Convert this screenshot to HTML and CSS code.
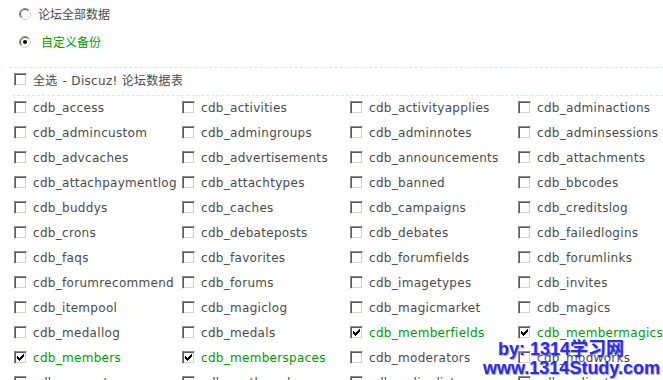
FILE: index.html
```html
<!DOCTYPE html>
<html lang="zh-CN">
<head>
<meta charset="utf-8">
<title>数据备份</title>
<link rel="stylesheet" href="styles.css">
</head>
<body>
<div class="choices">
  <label class="opt">
    <svg class="radio" width="12" height="12" viewBox="0 0 12 12"><circle cx="6" cy="6" r="5.5" fill="#fff" stroke="#fff"/><path d="M9.9 2.1A5.5 5.5 0 0 1 2.1 9.9" fill="none" stroke="#d4d0c8"/><path d="M2.1 9.9A5.5 5.5 0 0 1 9.9 2.1" fill="none" stroke="#8c8c8c"/><path d="M2.8 9.2A4.5 4.5 0 0 1 9.2 2.8" fill="none" stroke="#555"/></svg>
    <span>论坛全部数据</span>
  </label>
  <label class="opt">
    <svg class="radio" width="12" height="12" viewBox="0 0 12 12"><circle cx="6" cy="6" r="5.5" fill="#fff" stroke="#fff"/><path d="M9.9 2.1A5.5 5.5 0 0 1 2.1 9.9" fill="none" stroke="#d4d0c8"/><path d="M2.1 9.9A5.5 5.5 0 0 1 9.9 2.1" fill="none" stroke="#8c8c8c"/><path d="M2.8 9.2A4.5 4.5 0 0 1 9.2 2.8" fill="none" stroke="#555"/><circle cx="6" cy="6" r="2" fill="#000"/></svg>
    <span class="green custom">自定义备份</span>
  </label>
</div>

<div class="section">
  <div class="head">
    <span class="cb"></span>
    <span class="label">全选</span>
    <span class="desc">- Discuz! 论坛数据表</span>
  </div>
</div>

<div class="grid">
  <label class="item"><span class="cb"></span><span>cdb_access</span></label>
  <label class="item"><span class="cb"></span><span>cdb_activities</span></label>
  <label class="item"><span class="cb"></span><span>cdb_activityapplies</span></label>
  <label class="item"><span class="cb"></span><span>cdb_adminactions</span></label>

  <label class="item"><span class="cb"></span><span>cdb_admincustom</span></label>
  <label class="item"><span class="cb"></span><span>cdb_admingroups</span></label>
  <label class="item"><span class="cb"></span><span>cdb_adminnotes</span></label>
  <label class="item"><span class="cb"></span><span>cdb_adminsessions</span></label>

  <label class="item"><span class="cb"></span><span>cdb_advcaches</span></label>
  <label class="item"><span class="cb"></span><span>cdb_advertisements</span></label>
  <label class="item"><span class="cb"></span><span>cdb_announcements</span></label>
  <label class="item"><span class="cb"></span><span>cdb_attachments</span></label>

  <label class="item"><span class="cb"></span><span>cdb_attachpaymentlog</span></label>
  <label class="item"><span class="cb"></span><span>cdb_attachtypes</span></label>
  <label class="item"><span class="cb"></span><span>cdb_banned</span></label>
  <label class="item"><span class="cb"></span><span>cdb_bbcodes</span></label>

  <label class="item"><span class="cb"></span><span>cdb_buddys</span></label>
  <label class="item"><span class="cb"></span><span>cdb_caches</span></label>
  <label class="item"><span class="cb"></span><span>cdb_campaigns</span></label>
  <label class="item"><span class="cb"></span><span>cdb_creditslog</span></label>

  <label class="item"><span class="cb"></span><span>cdb_crons</span></label>
  <label class="item"><span class="cb"></span><span>cdb_debateposts</span></label>
  <label class="item"><span class="cb"></span><span>cdb_debates</span></label>
  <label class="item"><span class="cb"></span><span>cdb_failedlogins</span></label>

  <label class="item"><span class="cb"></span><span>cdb_faqs</span></label>
  <label class="item"><span class="cb"></span><span>cdb_favorites</span></label>
  <label class="item"><span class="cb"></span><span>cdb_forumfields</span></label>
  <label class="item"><span class="cb"></span><span>cdb_forumlinks</span></label>

  <label class="item"><span class="cb"></span><span>cdb_forumrecommend</span></label>
  <label class="item"><span class="cb"></span><span>cdb_forums</span></label>
  <label class="item"><span class="cb"></span><span>cdb_imagetypes</span></label>
  <label class="item"><span class="cb"></span><span>cdb_invites</span></label>

  <label class="item"><span class="cb"></span><span>cdb_itempool</span></label>
  <label class="item"><span class="cb"></span><span>cdb_magiclog</span></label>
  <label class="item"><span class="cb"></span><span>cdb_magicmarket</span></label>
  <label class="item"><span class="cb"></span><span>cdb_magics</span></label>

  <label class="item"><span class="cb"></span><span>cdb_medallog</span></label>
  <label class="item"><span class="cb"></span><span>cdb_medals</span></label>
  <label class="item on"><span class="cb"><svg width="7" height="7" viewBox="0 0 7 7" shape-rendering="crispEdges"><path d="M6 0h1v1h-1zM5 1h2v1h-2zM0 2h1v1h-1zM4 2h3v1h-3zM0 3h2v1h-2zM3 3h3v1h-3zM0 4h5v1h-5zM1 5h3v1h-3zM2 6h1v1h-1z" fill="#000"/></svg></span><span>cdb_memberfields</span></label>
  <label class="item on"><span class="cb"><svg width="7" height="7" viewBox="0 0 7 7" shape-rendering="crispEdges"><path d="M6 0h1v1h-1zM5 1h2v1h-2zM0 2h1v1h-1zM4 2h3v1h-3zM0 3h2v1h-2zM3 3h3v1h-3zM0 4h5v1h-5zM1 5h3v1h-3zM2 6h1v1h-1z" fill="#000"/></svg></span><span>cdb_membermagics</span></label>

  <label class="item on"><span class="cb"><svg width="7" height="7" viewBox="0 0 7 7" shape-rendering="crispEdges"><path d="M6 0h1v1h-1zM5 1h2v1h-2zM0 2h1v1h-1zM4 2h3v1h-3zM0 3h2v1h-2zM3 3h3v1h-3zM0 4h5v1h-5zM1 5h3v1h-3zM2 6h1v1h-1z" fill="#000"/></svg></span><span>cdb_members</span></label>
  <label class="item on"><span class="cb"><svg width="7" height="7" viewBox="0 0 7 7" shape-rendering="crispEdges"><path d="M6 0h1v1h-1zM5 1h2v1h-2zM0 2h1v1h-1zM4 2h3v1h-3zM0 3h2v1h-2zM3 3h3v1h-3zM0 4h5v1h-5zM1 5h3v1h-3zM2 6h1v1h-1z" fill="#000"/></svg></span><span>cdb_memberspaces</span></label>
  <label class="item"><span class="cb"></span><span>cdb_moderators</span></label>
  <label class="item"><span class="cb"></span><span>cdb_modworks</span></label>

  <label class="item"><span class="cb"></span><span>cdb_myposts</span></label>
  <label class="item"><span class="cb"></span><span>cdb_mythreads</span></label>
  <label class="item"><span class="cb"></span><span>cdb_onlinelist</span></label>
  <label class="item"><span class="cb"></span><span>cdb_onlinetime</span></label>
</div>

<div class="watermark">
  <div class="wm1">by: 1314学习网</div>
  <div class="wm2">www.1314Study.com</div>
</div>
</body>
</html>
```

FILE: styles.css
```css
html, body {
  margin: 0;
  padding: 0;
  background: #fff;
}

body {
  font-family: "DejaVu Sans", "Noto Sans CJK SC", sans-serif;
  font-size: 12px;
  color: #4a4a4a;
  position: relative;
  overflow: hidden;
  height: 380px;
}

.choices {
  display: flex;
  flex-direction: column;
  margin-top: -1px;
}

.opt {
  height: 28px;
  display: flex;
  align-items: center;
  padding-left: 19px;
  gap: 7px;
}

.radio {
  display: block;
  flex: none;
  margin-top: 1px;
}

.green {
  color: #009900;
}

.custom {
  margin-left: 3px;
}

.section {
  margin-top: 12px;
  margin-left: 9px;
  border-top: 1px dashed #d3e6f4;
}

.head {
  margin-left: 3px;
  height: 28px;
  border-bottom: 1px dashed #d3e6f4;
  display: flex;
  align-items: center;
  padding-left: 2px;
  padding-bottom: 4px;
  box-sizing: border-box;
  letter-spacing: 0.3px;
}

.head .label {
  margin-left: 6px;
}

.head .desc {
  margin-left: 5px;
}

.cb {
  flex: none;
  box-sizing: border-box;
  width: 13px;
  height: 13px;
  border: 1px solid;
  border-color: #8c8c8c #fff #fff #8c8c8c;
  box-shadow: inset 1px 1px #5a5a5a, inset -1px -1px #d4d0c8;
  background: #fff;
  display: flex;
  align-items: flex-start;
  justify-content: flex-start;
}

.cb svg {
  display: block;
  margin: 2px 0 0 2px;
}

.grid {
  display: grid;
  grid-template-columns: repeat(4, 168px);
  grid-auto-rows: 25px;
  padding-left: 14px;
  margin-top: -1px;
}

.item {
  display: flex;
  align-items: center;
  gap: 6px;
  white-space: nowrap;
  letter-spacing: 0.3px;
}

.item.on {
  color: #009900;
}

.watermark {
  position: absolute;
  left: 483px;
  top: 340px;
  font-family: "Liberation Sans", "Noto Sans CJK SC", sans-serif;
  font-weight: bold;
  font-size: 18px;
  line-height: 19px;
  color: #2a2af5;
  text-shadow: 1px 1px 1px rgba(0, 0, 0, 0.35), 0 0 2px #fff;
  white-space: nowrap;
}

.wm1 {
  padding-left: 15px;
}
```
